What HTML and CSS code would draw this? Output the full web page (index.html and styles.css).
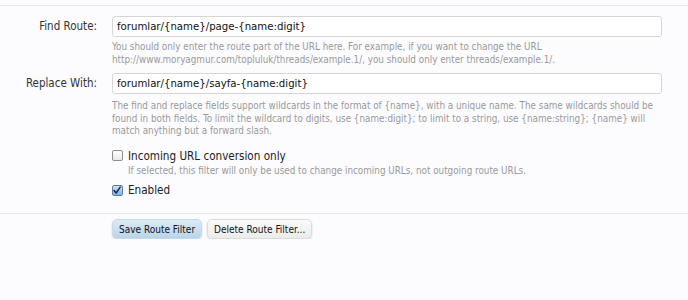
FILE: index.html
```html
<!DOCTYPE html>
<html>
<head>
<meta charset="utf-8">
<link rel="stylesheet" href="styles.css">
</head>
<body>
<form class="form">
  <div class="fields">
    <div class="row">
      <label class="label">Find Route:</label>
      <div class="control">
        <div class="input">forumlar/{name}/page-{name:digit}</div>
        <p class="hint">You should only enter the route part of the URL here. For example, if you want to change the URL<br>http://www.moryagmur.com/topluluk/threads/example.1/, you should only enter threads/example.1/.</p>
      </div>
    </div>
    <div class="row row2">
      <label class="label">Replace With:</label>
      <div class="control">
        <div class="input">forumlar/{name}/sayfa-{name:digit}</div>
        <p class="hint hint2">The find and replace fields support wildcards in the format of {name}, with a unique name. The same wildcards should be<br>found in both fields. To limit the wildcard to digits, use {name:digit}; to limit to a string, use {name:string}; {name} will<br>match anything but a forward slash.</p>
      </div>
    </div>
    <div class="row checks">
      <div class="label"></div>
      <div class="control">
        <div class="check">
          <span class="box"></span>
          <span class="check-text">Incoming URL conversion only</span>
        </div>
        <p class="hint sub">If selected, this filter will only be used to change incoming URLs, not outgoing route URLs.</p>
        <div class="check check2">
          <span class="box checked"><svg viewBox="0 0 11 11" width="11" height="11"><path d="M2.3 5.6 L4.6 8.2 L9 1.8" fill="none" stroke="#1d2a44" stroke-width="1.7" stroke-linecap="round" stroke-linejoin="round"/></svg></span>
          <span class="check-text">Enabled</span>
        </div>
      </div>
    </div>
  </div>
  <div class="buttons">
    <div class="label"></div>
    <div class="btns">
      <button type="button" class="btn primary">Save Route Filter</button>
      <button type="button" class="btn">Delete Route Filter...</button>
    </div>
  </div>
</form>
</body>
</html>
```
FILE: styles.css
```css
html, body {
  margin: 0;
  padding: 0;
  background: #fcfcff;
}
body {
  font-family: "DejaVu Sans Condensed", "DejaVu Sans", sans-serif;
  color: #333;
  padding-top: 5px;
}
.form {
  margin: 0;
}
.fields {
  border-top: 1px solid #dfeaef;
  border-bottom: 1px solid #dfeaef;
  padding: 10px 0 15px;
}
.row {
  display: grid;
  grid-template-columns: 97px 550px;
  column-gap: 15px;
}
.row2 {
  margin-top: 7px;
}
.label {
  text-align: right;
  font-size: 11.5px;
  line-height: 21px;
  color: #333;
}
.input {
  box-sizing: border-box;
  height: 21px;
  border: 1px solid #d6d6d6;
  border-radius: 3px;
  background: #fff;
  font-size: 11.3px;
  line-height: 19px;
  padding: 0 4px;
  color: #111;
}
.hint {
  margin: 4px 0 0;
  font-size: 9.8px;
  line-height: 12.5px;
  color: #999;
}
.hint2 {
  margin-top: 6px;
}
.checks {
  margin-top: 10px;
}
.check {
  display: flex;
  align-items: center;
  height: 16px;
}
.check2 {
  margin-top: 5px;
}
.box {
  box-sizing: border-box;
  width: 11px;
  height: 11px;
  border: 1px solid #8e8e8e;
  border-radius: 2px;
  background: linear-gradient(#fff, #e9e9e9);
  margin-right: 5px;
  display: inline-flex;
}
.box.checked {
  border-color: #5d7ea6;
  background: linear-gradient(#cfe3f7, #7fb0e2);
}
.box svg {
  margin: -1px 0 0 -1px;
}
.check-text {
  font-size: 11.6px;
  color: #222;
}
.hint.sub {
  margin: 1px 0 0 16px;
}
.buttons {
  display: grid;
  grid-template-columns: 97px auto;
  column-gap: 15px;
  padding-top: 5px;
}
.btns {
  display: flex;
  gap: 5px;
}
.btn {
  font-family: inherit;
  font-size: 10px;
  color: #111;
  height: 20px;
  padding: 0 6px;
  border: 1px solid #dcdcdc;
  border-radius: 5px;
  background: linear-gradient(#fafafa, #ececec);
  box-shadow: 0 1px 2px rgba(0,0,0,0.18);
}
.btn.primary {
  border-color: #c8dae8;
  background: linear-gradient(#dcebf6, #b9d4ea);
}
```
